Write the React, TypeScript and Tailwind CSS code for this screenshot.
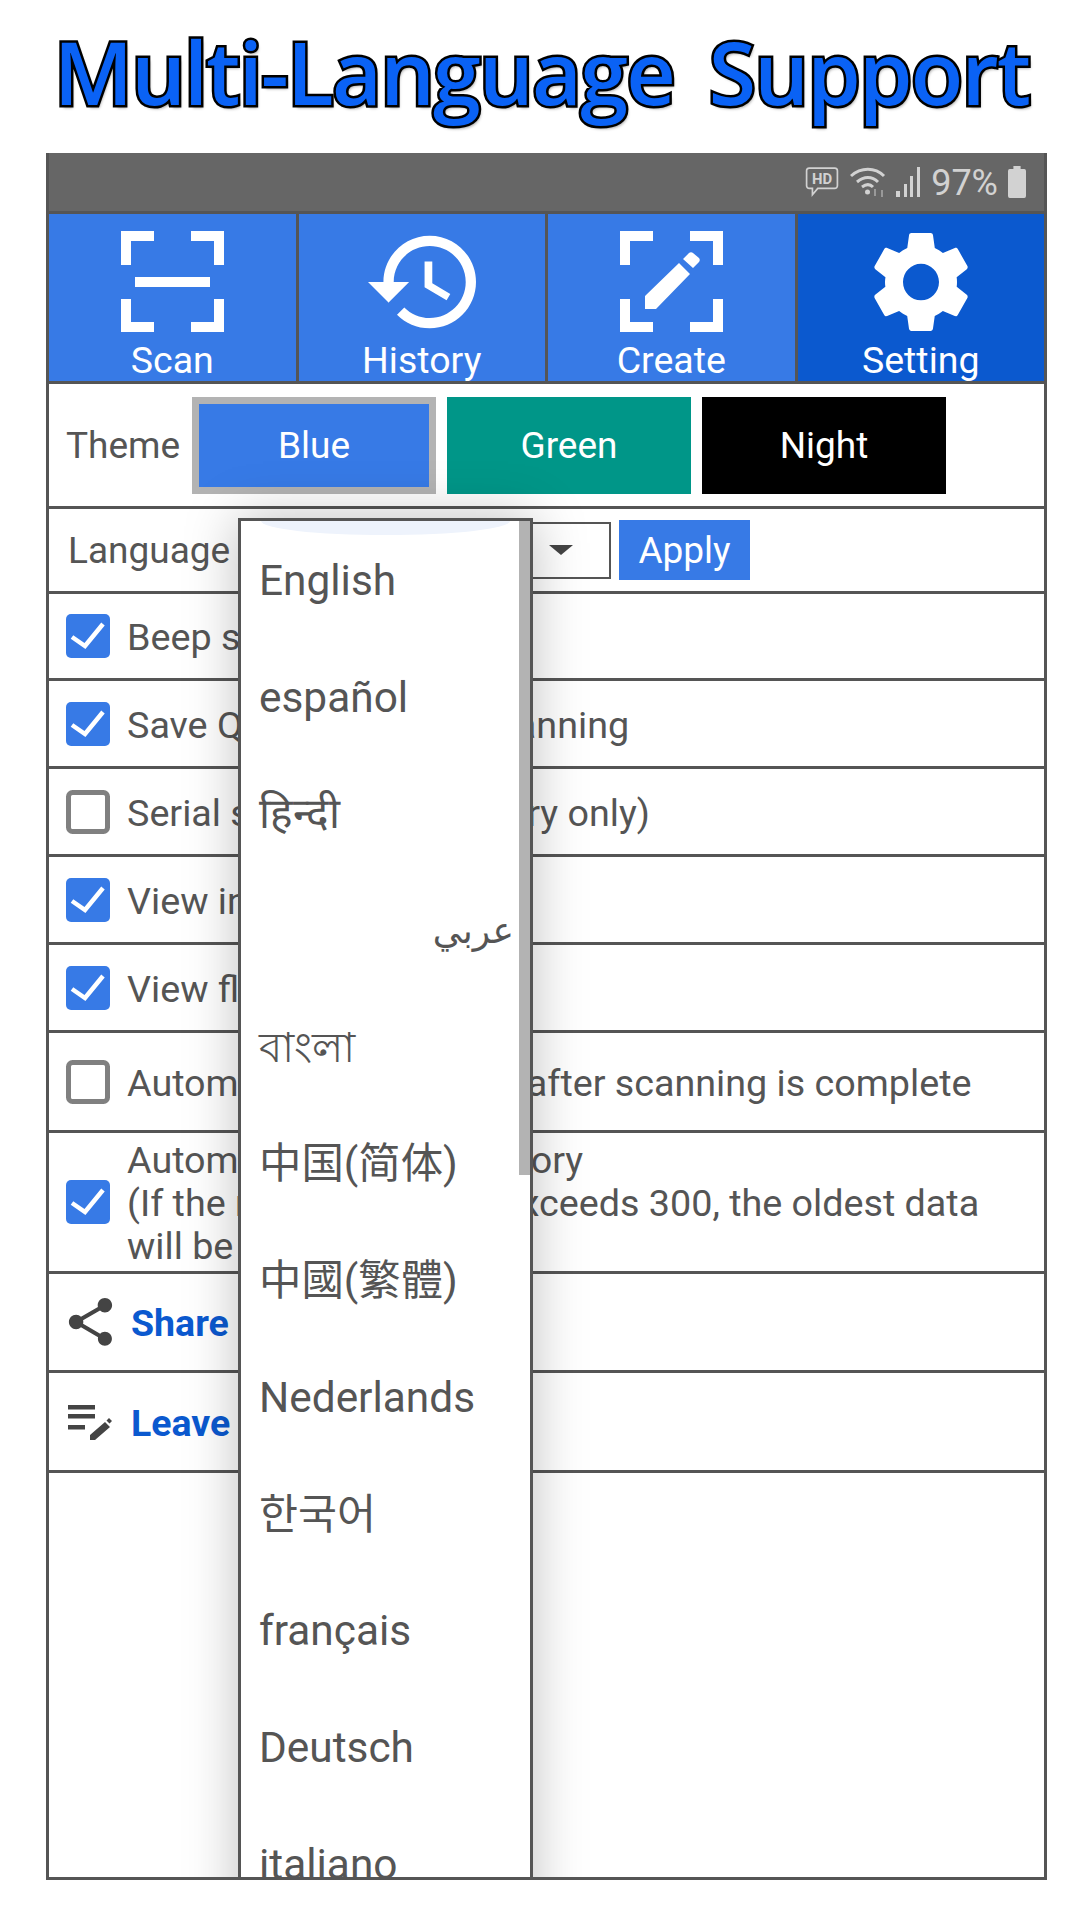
import { ReactNode } from "react";

interface NavItem {
  label: string;
  active?: boolean;
  icon: ReactNode;
}

const ScanIcon = () => (
  <svg viewBox="0 0 103 101" className="w-[103px] h-[101px]" fill="#fff">
    <path d="M0 0h33v10H10v24H0zM70 0h33v34H93V10H70zM0 68h10v23h23v10H0zM93 68h10v33H70V91h23z" />
    <rect x="14" y="46" width="75" height="10" />
  </svg>
);

const HistoryIcon = () => (
  <svg viewBox="1 3 21 18" className="w-[108px] h-[94px]" fill="#fff">
    <path d="M13 3c-4.97 0-9 4.03-9 9H1l3.89 3.89.07.14L9 12H6c0-3.87 3.13-7 7-7s7 3.13 7 7-3.13 7-7 7c-1.93 0-3.68-.79-4.94-2.06l-1.42 1.42C8.27 19.99 10.51 21 13 21c4.97 0 9-4.03 9-9s-4.03-9-9-9zm-1 5v5l4.28 2.54.72-1.21-3.5-2.08V8H12z" />
  </svg>
);

const CreateIcon = () => (
  <svg viewBox="0 0 103 101" className="w-[103px] h-[101px]" fill="#fff">
    <path d="M0 0h33v10H10v24H0zM70 0h33v34H93V10H70zM0 68h10v23h23v10H0zM93 68h10v33H70V91h23z" />
    <path d="M25 78V65L59 32l11 11-34 35zM63 28l6-6c1-1 3-1 4 0l6 5c1 1 1 3 0 4l-6 6z" />
  </svg>
);

const SettingIcon = () => (
  <svg viewBox="2 2 20 20" className="w-[100px] h-[102px]" fill="#fff" preserveAspectRatio="none">
    <path d="M19.14 12.94c.04-.3.06-.61.06-.94 0-.32-.02-.64-.07-.94l2.03-1.58c.18-.14.23-.41.12-.61l-1.92-3.32c-.12-.22-.37-.29-.59-.22l-2.39.96c-.5-.38-1.03-.7-1.62-.94l-.36-2.54c-.04-.24-.24-.41-.48-.41h-3.84c-.24 0-.43.17-.47.41l-.36 2.54c-.59.24-1.13.57-1.62.94l-2.39-.96c-.22-.08-.47 0-.59.22L2.74 8.87c-.12.21-.08.47.12.61l2.03 1.58c-.05.3-.09.63-.09.94s.02.64.07.94l-2.03 1.58c-.18.14-.23.41-.12.61l1.92 3.32c.12.22.37.29.59.22l2.39-.96c.5.38 1.03.7 1.62.94l.36 2.54c.05.24.24.41.48.41h3.84c.24 0 .44-.17.47-.41l.36-2.54c.59-.24 1.13-.56 1.62-.94l2.39.96c.22.08.47 0 .59-.22l1.92-3.32c.12-.22.07-.47-.12-.61l-2.01-1.58zM12 15.6c-1.98 0-3.6-1.62-3.6-3.6s1.62-3.6 3.6-3.6 3.6 1.62 3.6 3.6-1.62 3.6-3.6 3.6z" />
  </svg>
);

const navItems: NavItem[] = [
  { label: "Scan", icon: <ScanIcon /> },
  { label: "History", icon: <HistoryIcon /> },
  { label: "Create", icon: <CreateIcon /> },
  { label: "Setting", active: true, icon: <SettingIcon /> },
];

const CheckBox = ({ checked }: { checked: boolean }) =>
  checked ? (
    <svg viewBox="0 0 44 44" className="w-[44px] h-[44px] shrink-0">
      <rect width="44" height="44" rx="5" fill="#377ae6" />
      <path d="M6 23l13 9L37 10" fill="none" stroke="#fff" strokeWidth="4.500" />
    </svg>
  ) : (
    <svg viewBox="0 0 44 44" className="w-[44px] h-[44px] shrink-0">
      <rect x="2.500" y="2.500" width="39" height="39" rx="4" fill="#fff" stroke="#808080" strokeWidth="5" />
    </svg>
  );

// the dropdown hides the middle of these, so the wording there is a guess
const checkRows = [
  { text: "Beep sound", checked: true, h: "h-[87px]" },
  { text: "Save QR image after scanning", checked: true, h: "h-[88px]" },
  { text: "Serial scanning (in history only)", checked: false, h: "h-[88px]" },
  { text: "View in-app browser", checked: true, h: "h-[88px]" },
  { text: "View flash button", checked: true, h: "h-[88px]" },
  { text: "Automatically open link after scanning is complete", checked: false, h: "h-[100px]" },
];

const languages = [
  "English",
  "español",
  "हिन्दी",
  "عربي",
  "বাংলা",
  "中国(简体)",
  "中國(繁體)",
  "Nederlands",
  "한국어",
  "français",
  "Deutsch",
  "italiano",
];

const StatusBar = () => (
  <div className="h-[58px] bg-[#666666] flex items-center justify-end gap-[5px] pr-[18px] text-[#d2d2d2]">
    <svg viewBox="0 0 32 30" className="w-[34px] h-[32px]" fill="none" stroke="#d2d2d2" strokeWidth="1.600">
      <path d="M4 2h24a2.500 2.500 0 0 1 2.500 2.500v14a2.500 2.500 0 0 1-2.500 2.500H12l-5 6v-6H4a2.500 2.500 0 0 1-2.500-2.500v-14A2.500 2.500 0 0 1 4 2z" />
      <text x="16" y="17" textAnchor="middle" fontSize="14" fontWeight="700" fill="#d2d2d2" stroke="none" fontFamily="Roboto, sans-serif">
        HD
      </text>
    </svg>
    <svg viewBox="0 0 40 34" className="w-[40px] h-[34px] ml-[6px]" fill="none" stroke="#d2d2d2" strokeWidth="3">
      <path d="M1 11c10-9 24-9 33 0M7 17c7-6 15-6 21 0M12 22c4-3 8-3 11 0" />
      <circle cx="17.500" cy="27" r="2.500" fill="#d2d2d2" stroke="none" />
      <path d="M25 24v7M32 32v-7" strokeWidth="1.500" stroke="#aaa" />
    </svg>
    <svg viewBox="0 0 28 34" className="w-[28px] h-[34px]" fill="#d2d2d2">
      <rect x="1" y="26" width="4" height="6" />
      <rect x="9" y="19" width="3" height="13" />
      <rect x="15" y="11" width="3" height="21" />
      <rect x="22" y="2" width="3" height="30" />
    </svg>
    <span className="text-[36px] ml-[3px] pt-[2px]">97%</span>
    <svg viewBox="0 0 20 32" className="w-[18px] h-[32px] ml-[5px]" fill="#d2d2d2" preserveAspectRatio="none">
      <path d="M6 0h8v3h4a2 2 0 0 1 2 2v25a2 2 0 0 1-2 2H2a2 2 0 0 1-2-2V5a2 2 0 0 1 2-2h4z" />
    </svg>
  </div>
);

const ThemeButton = ({ label, className }: { label: string; className: string }) => (
  <div className={`w-[244px] h-[97px] flex items-center justify-center text-white text-[37px] pt-[2px] ${className}`}>{label}</div>
);

export default function App() {
  return (
    <div className="w-[1091px] h-[1920px] bg-white pl-[46px] pr-[44px] flex flex-col font-['Roboto',sans-serif]">
      {/* Title */}
      <div className="h-[153px] flex items-center justify-center pb-[10px] -ml-[10px]">
        <h1 className="text-[86px] leading-none font-semibold text-[#0a62f5] font-['Open_Sans',sans-serif] tracking-[-1.700px] [word-spacing:14px] [-webkit-text-stroke:5px_#000] [paint-order:stroke_fill] [text-shadow:2px_3px_3px_rgba(0,0,0,0.35)] whitespace-nowrap">
          Multi-Language Support
        </h1>
      </div>

      {/* Phone frame */}
      <div className="h-[1727px] border-x-[3px] border-b-[3px] border-[#555555] flex flex-col overflow-hidden text-[#555555] text-[37.700px]">
        <StatusBar />

        <div className="h-[173px] flex bg-[#555555] gap-[3px] py-[3px]">
          {navItems.map((item) => (
            <div
              key={item.label}
              className={`flex-1 flex flex-col items-center text-white ${item.active ? "bg-[#0b59cf]" : "bg-[#377ae6]"}`}
            >
              <div className="h-[125px] flex items-center justify-center pt-[12px]">{item.icon}</div>
              <span className="text-[37.500px] leading-[42px] pt-[2px]">{item.label}</span>
            </div>
          ))}
        </div>

        <div className="relative flex-1 flex flex-col">
          <div className="h-[125px] flex items-center gap-[11px] px-[17px] border-b-[3px] border-[#555555]">
            <span className="w-[115px] text-[37px] pt-[2px]">Theme</span>
            <ThemeButton label="Blue" className="bg-[#377ae6] border-[7px] border-[#b3b3b3]" />
            <ThemeButton label="Green" className="bg-[#009688]" />
            <ThemeButton label="Night" className="bg-black" />
          </div>

          <div className="h-[85px] flex items-center gap-[8px] pl-[19px] border-b-[3px] border-[#555555]">
            <span className="w-[180px] text-[37px] pt-[2px]">Language</span>
            <div className="w-[355px] h-[57px] border-2 border-[#555555] flex items-center justify-end pr-[36px]">
              <span className="w-0 h-0 border-x-[12px] border-x-transparent border-t-[10px] border-t-[#444444]" />
            </div>
            <div className="w-[131px] h-[60px] bg-[#377ae6] text-white text-[37px] flex items-center justify-center pt-[2px]">Apply</div>
          </div>

          {checkRows.map((row) => (
            <div key={row.text} className={`${row.h} flex items-center gap-[17px] pl-[17px] border-b-[3px] border-[#555555] whitespace-nowrap`}>
              <CheckBox checked={row.checked} />
              <span className="pt-[3px]">{row.text}</span>
            </div>
          ))}

          <div className="h-[141px] flex items-center gap-[17px] pl-[17px] border-b-[3px] border-[#555555] leading-[43px]">
            <CheckBox checked />
            <span className="pt-[2px]">
              Automatically put in history
              <br />
              (If the number of data exceeds 300, the oldest data
              <br />
              will be deleted)
            </span>
          </div>

          <div className="h-[99px] flex items-center gap-[18px] pl-[19px] border-b-[3px] border-[#555555]">
            <svg viewBox="3 2 18 20" className="w-[45px] h-[48px]" fill="#444444">
              <path d="M18 16.080c-.76 0-1.440.3-1.960.77L8.910 12.700c.05-.23.090-.46.090-.7s-.04-.47-.09-.7l7.050-4.110c.54.5 1.250.81 2.040.81 1.660 0 3-1.340 3-3s-1.340-3-3-3-3 1.340-3 3c0 .24.040.47.090.7L8.040 9.810C7.500 9.310 6.790 9 6 9c-1.660 0-3 1.340-3 3s1.340 3 3 3c.79 0 1.500-.31 2.040-.81l7.120 4.160c-.05.21-.08.43-.08.650 0 1.610 1.310 2.920 2.920 2.920s2.920-1.310 2.920-2.920-1.310-2.920-2.920-2.920z" />
            </svg>
            <span className="font-bold text-[#0b59cf] text-[37.500px] pt-[3px]">Share</span>
          </div>

          <div className="h-[100px] flex items-center gap-[19px] pl-[19px] border-b-[3px] border-[#555555]">
            <svg viewBox="0 0 44 35" className="w-[44px] h-[35px] mt-[2px]" fill="#444444">
              <rect x="0" y="0" width="27" height="4.500" />
              <rect x="0" y="9" width="27" height="4.500" />
              <rect x="0" y="20" width="17" height="4.500" />
              <path d="M22 35v-5l15-13 5 5-15 13zM38.500 15.500l2.500-2.500 3 3-2.500 2.500z" />
            </svg>
            <span className="font-bold text-[#0b59cf] text-[37.500px] pt-[3px]">Leave a review</span>
          </div>

          {/* Language dropdown */}
          <div className="absolute left-[189px] top-[134px] w-[295px] h-[1500px] bg-white border-[3px] border-[#555555] shadow-[0_0_50px_rgba(0,0,0,0.25)] overflow-hidden text-[42.400px]">
            <div className="absolute left-[20px] right-[20px] -top-[14px] h-[28px] rounded-[50%] bg-[#eef3fc]" />
            <div className="absolute right-0 top-0 w-[11px] h-[654px] bg-[#b3b3b3]" />
            {languages.map((lang) => (
              <div
                key={lang}
                dir={lang === "عربي" ? "rtl" : "ltr"}
                className={`h-[116.700px] flex items-center px-[18px] pt-[3px] font-['Roboto','Noto_Sans_CJK_SC','Noto_Sans_CJK_KR','DejaVu_Sans',sans-serif] ${lang === "عربي" ? "text-[36px] pr-[16px]" : ""}`}
              >
                {lang}
              </div>
            ))}
          </div>
        </div>
      </div>
    </div>
  );
}
